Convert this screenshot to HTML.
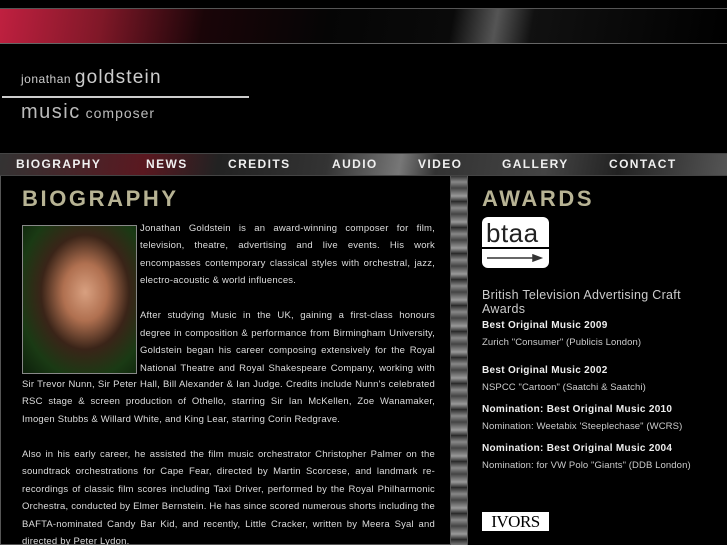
<!DOCTYPE html>
<html><head><style>
*{margin:0;padding:0;box-sizing:border-box}
html,body{width:727px;height:545px;overflow:hidden}
body{background:#000;position:relative;font-family:"Liberation Sans",sans-serif;color:#ddd}
.a{position:absolute}
.banner{left:0;top:8px;width:727px;height:36px;border-top:1px solid #555;border-bottom:1px solid #666;background:linear-gradient(100deg,#c02040 0%,#801828 14%,#1a0508 28%,#050505 45%,#0a0a0a 62%,#555 68%,#111 73%,#000 100%)}
.nav{left:0;top:153px;width:727px;height:23px;border-top:1px solid #444;border-bottom:1px solid #444;background:linear-gradient(100deg,#333 0%,#5a1820 20%,#222 30%,#333 45%,#777 55%,#333 60%,#444 75%,#222 85%,#555 100%)}
.nav span{position:absolute;top:3px;font-weight:bold;font-size:12px;color:#f0f0f0;letter-spacing:1.4px}
.left{left:0;top:176px;width:451px;height:369px;border:1px solid #555;border-top:none;background:#000}
.strip{left:451px;top:176px;width:16px;height:369px;background:repeating-linear-gradient(180deg,#333 0,#888 6px,#444 12px,#999 20px,#222 26px)}
.right{left:467px;top:176px;width:260px;height:369px;border-left:1px solid #555;background:#000}
h1{position:absolute;font-size:22px;font-weight:900;color:#b7b394;letter-spacing:2.6px;font-family:"Liberation Sans",sans-serif}
.bio{position:absolute;font-size:9.5px;line-height:17.45px;color:#ddd;letter-spacing:.2px}
.bio i{font-style:normal;display:block;white-space:nowrap;text-align:justify;text-align-last:justify}
.bio i.l{text-align-last:left}
.photo{left:22px;top:225px;width:115px;height:149px;border:1px solid #888;background:radial-gradient(ellipse at 55% 45%,#d8a080 0,#b07050 25%,#3a2418 50%,#1a3a14 75%,#0d200b 100%)}
.r b{display:block;font-size:10px;color:#eee;letter-spacing:.3px}
.r div{font-size:9.5px;color:#ccc;letter-spacing:.1px}
</style></head><body>
<div class="a banner"></div>
<div class="a" style="left:21px;top:67px;color:#ccc;font-size:12px;letter-spacing:.5px">jonathan <span style="font-size:19px;letter-spacing:1.2px">goldstein</span></div>
<div class="a" style="left:2px;top:96px;width:247px;height:2px;background:#ccc"></div>
<div class="a" style="left:21px;top:101px;color:#bbb;font-size:14px;letter-spacing:1px"><span style="font-size:20px;letter-spacing:1.5px">music</span> composer</div>
<div class="a nav">
<span style="left:16px">BIOGRAPHY</span><span style="left:146px">NEWS</span><span style="left:228px">CREDITS</span><span style="left:332px">AUDIO</span><span style="left:418px">VIDEO</span><span style="left:502px">GALLERY</span><span style="left:609px">CONTACT</span>
</div>
<div class="a left"></div>
<div class="a strip"></div>
<div class="a right"></div>
<h1 style="left:22px;top:186px">BIOGRAPHY</h1>
<div class="a photo"></div>
<div class="bio" style="left:140px;top:220px;width:295px">
<i>Jonathan Goldstein is an award-winning composer for film,</i>
<i>television, theatre, advertising and live events. His work</i>
<i>encompasses contemporary classical styles with orchestral, jazz,</i>
<i class="l">electro-acoustic &amp; world influences.</i>
<i class="l">&nbsp;</i>
<i>After studying Music in the UK, gaining a first-class honours</i>
<i>degree in composition &amp; performance from Birmingham University,</i>
<i>Goldstein began his career composing extensively for the Royal</i>
<i>National Theatre and Royal Shakespeare Company, working with</i>
</div>
<div class="bio" style="left:22px;top:376px;width:413px">
<i>Sir Trevor Nunn, Sir Peter Hall, Bill Alexander &amp; Ian Judge. Credits include Nunn's celebrated</i>
<i>RSC stage &amp; screen production of Othello, starring Sir Ian McKellen, Zoe Wanamaker,</i>
<i class="l">Imogen Stubbs &amp; Willard White, and King Lear, starring Corin Redgrave.</i>
<i class="l">&nbsp;</i>
<i>Also in his early career, he assisted the film music orchestrator Christopher Palmer on the</i>
<i>soundtrack orchestrations for Cape Fear, directed by Martin Scorcese, and landmark re-</i>
<i>recordings of classic film scores including Taxi Driver, performed by the Royal Philharmonic</i>
<i>Orchestra, conducted by Elmer Bernstein. He has since scored numerous shorts including the</i>
<i>BAFTA-nominated Candy Bar Kid, and recently, Little Cracker, written by Meera Syal and</i>
<i class="l">directed by Peter Lydon.</i>
</div>
<h1 style="left:482px;top:186px">AWARDS</h1>
<div class="a" style="left:482px;top:217px;width:67px;height:51px;background:#fff;border-radius:6px"></div>
<div class="a" style="left:486px;top:218px;font-size:26px;color:#222;letter-spacing:.5px">btaa</div>
<div class="a" style="left:482px;top:247px;width:67px;height:2px;background:#000"></div>
<svg class="a" style="left:487px;top:254px" width="58" height="8"><path d="M0 4H52M46 1L54 4L46 7Z" stroke="#333" stroke-width="1.5" fill="#333"/></svg>
<div class="a" style="left:482px;top:288px;width:240px;font-size:12.5px;line-height:14px;color:#ccc;letter-spacing:.3px">British Television Advertising Craft Awards</div>
<div class="a r" style="left:482px;top:320px">
<b>Best Original Music 2009</b><div style="margin-top:6px">Zurich "Consumer" (Publicis London)</div>
<b style="margin-top:17px">Best Original Music 2002</b><div style="margin-top:6px">NSPCC "Cartoon" (Saatchi &amp; Saatchi)</div>
<b style="margin-top:11px">Nomination: Best Original Music 2010</b><div style="margin-top:6px">Nomination: Weetabix 'Steeplechase" (WCRS)</div>
<b style="margin-top:11px">Nomination: Best Original Music 2004</b><div style="margin-top:6px">Nomination: for VW Polo "Giants" (DDB London)</div>
</div>
<div class="a" style="left:482px;top:512px;width:67px;height:19px;background:#fff;color:#000;font-family:'Liberation Serif',serif;font-size:17px;line-height:19px;text-align:center;letter-spacing:-.5px">IVORS</div>
</body></html>
